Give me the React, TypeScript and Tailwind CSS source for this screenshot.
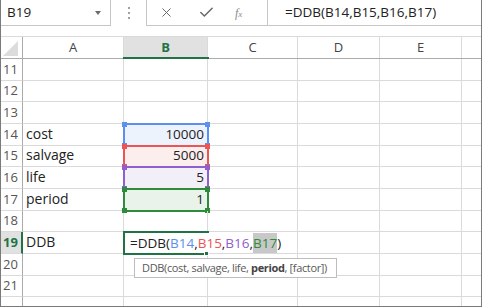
import { X, Check } from "lucide-react";

type RowSpec = { n: number; h: string; box: string; a?: string; b?: string; range?: Range };
type Range = { line: string; fill: string; sq: string };

const BLUE: Range = { line: "border-[#5b8ff0]", fill: "bg-[#edf3fd]", sq: "bg-[#5b8ff0]" };
const RED: Range = { line: "border-[#eb5555]", fill: "bg-[#fdeeee]", sq: "bg-[#eb5555]" };
const PURPLE: Range = { line: "border-[#8d5fcf]", fill: "bg-[#f3eff9]", sq: "bg-[#8d5fcf]" };
const GREEN: Range = { line: "border-[#2e8b3a]", fill: "bg-[#e9f3e9]", sq: "bg-[#2e8b3a]" };

const ROWS: RowSpec[] = [
  { n: 11, h: "h-[22px]", box: "h-[24px]" },
  { n: 12, h: "h-[21px]", box: "h-[23px]" },
  { n: 13, h: "h-[22px]", box: "h-[24px]" },
  { n: 14, h: "h-[22px]", box: "h-[24px]", a: "cost", b: "10000", range: BLUE },
  { n: 15, h: "h-[21px]", box: "h-[23px]", a: "salvage", b: "5000", range: RED },
  { n: 16, h: "h-[22px]", box: "h-[24px]", a: "life", b: "5", range: PURPLE },
  { n: 17, h: "h-[22px]", box: "h-[24px]", a: "period", b: "1", range: GREEN },
  { n: 18, h: "h-[21px]", box: "h-[23px]" },
  { n: 19, h: "h-[22px]", box: "h-[24px]", a: "DDB" },
  { n: 20, h: "h-[22px]", box: "h-[24px]" },
  { n: 21, h: "h-[21px]", box: "h-[23px]" },
];

const grid = "border-r border-b border-[#dadada]";

export default function App() {
  return (
    <div className="flex h-[307px] w-[482px] flex-col overflow-hidden border-x border-b border-[#7a7a7a] bg-white font-['Open_Sans',sans-serif] text-[#222]">
      <FormulaBar />
      <div className="h-[10px] shrink-0" />
      <HeaderRow />
      {ROWS.map((r) => (
        <Row key={r.n} row={r} />
      ))}
      <div className="flex min-h-0 flex-1">
        <div className="w-[22px] shrink-0 border-r border-[#ababab]" />
        <div className="w-[101px] shrink-0 border-r border-[#dadada]" />
        <div className="w-[84px] shrink-0 border-r border-[#dadada]" />
        <div className="w-[90px] shrink-0 border-r border-[#dadada]" />
        <div className="w-[82px] shrink-0 border-r border-[#dadada]" />
        <div className="w-[82px] shrink-0 border-r border-[#dadada]" />
        <div className="flex-1" />
      </div>
    </div>
  );
}

function FormulaBar() {
  return (
    <div className="flex h-[26px] shrink-0 text-[13.5px]">
      <div className="relative flex w-[110px] shrink-0 items-center border-r border-b border-[#c6c6c6] pl-[6px]">
        B19
        <span className="absolute right-[9px] top-[11px] h-0 w-0 border-x-[3.5px] border-t-[4px] border-x-transparent border-t-[#6b6b6b]" />
      </div>
      <div className="flex w-[35px] shrink-0 flex-col items-center justify-center gap-[3px] pl-[1px]">
        <span className="h-[2px] w-[2px] bg-[#a0a0a0]" />
        <span className="h-[2px] w-[2px] bg-[#a0a0a0]" />
        <span className="h-[2px] w-[2px] bg-[#a0a0a0]" />
      </div>
      <div className="flex w-[121px] shrink-0 items-center border-l border-b border-[#c6c6c6] text-[#6b6b6b]">
        <X className="ml-[12px]" size={15} strokeWidth={1.6} />
        <Check className="ml-[24px]" size={17} strokeWidth={2.2} />
        <span className="ml-[20px] font-['Liberation_Serif',serif] text-[12px] italic text-[#8a8a8a]">
          f<span className="text-[9px]">x</span>
        </span>
      </div>
      <div className="flex flex-1 items-center border-l border-b border-[#c6c6c6] pl-[17px]">
        =DDB(B14,B15,B16,B17)
      </div>
    </div>
  );
}

function HeaderRow() {
  const col = "flex shrink-0 items-center justify-center border-r border-[#dadada] text-[13px] text-[#444]";
  return (
    <div className="flex h-[23px] shrink-0 border-y border-t-[#dadada] border-b-[#ababab]">
      <div className="flex w-[22px] shrink-0 items-end justify-end border-r border-[#ababab] pb-[2px] pr-[4px]">
        <svg width="15" height="15" viewBox="0 0 15 15">
          <polygon points="15,0 15,15 0,15" fill="#dcdcdc" />
        </svg>
      </div>
      <div className={col + " w-[101px]"}>A</div>
      <div className="relative flex w-[84px] shrink-0 items-center justify-center border-r border-[#dadada] bg-[#e1e1e1] text-[13px] font-bold text-[#217346]">
        B
        <span className="absolute -bottom-[1px] -left-[1px] h-[2px] w-[86px] bg-[#217346]" />
      </div>
      <div className={col + " w-[90px]"}>C</div>
      <div className={col + " w-[82px]"}>D</div>
      <div className={col + " w-[82px]"}>E</div>
      <div className="flex-1" />
    </div>
  );
}

function Row({ row }: { row: RowSpec }) {
  const active = row.n === 19;
  return (
    <div className={"flex shrink-0 text-[13.5px] " + row.h}>
      <div
        className={
          "flex w-[22px] shrink-0 items-center border-b border-[#dadada] pl-[2px] text-[13px] " +
          (active
            ? "border-r-2 border-r-[#217346] bg-[#e1e1e1] font-bold text-[#217346]"
            : "border-r border-r-[#ababab] text-[#555]")
        }
      >
        {row.n}
      </div>
      <div className={"flex w-[101px] shrink-0 items-end pb-[1px] pl-[3px] text-[14px] " + grid}>{row.a}</div>
      <div
        className={
          "relative flex w-[84px] shrink-0 items-end justify-end pb-[1px] pr-[3px] " +
          grid +
          (row.range ? " " + row.range.fill : "")
        }
      >
        {row.b}
        {row.range && <RangeBox range={row.range} box={row.box} />}
        {active && <ActiveCell />}
      </div>
      <div className={"w-[90px] shrink-0 " + grid} />
      <div className={"w-[82px] shrink-0 " + grid} />
      <div className={"w-[82px] shrink-0 " + grid} />
      <div className="flex-1 border-b border-[#dadada]" />
    </div>
  );
}

function RangeBox({ range, box }: { range: Range; box: string }) {
  const sq = "absolute h-[5px] w-[5px] " + range.sq;
  return (
    <div className={"absolute -left-[1px] -top-[1px] w-[86px] " + box}>
      <div className={"absolute inset-0 border-2 " + range.line} />
      <span className={sq + " -left-[1px] -top-[1px]"} />
      <span className={sq + " -right-[1px] -top-[1px]"} />
      <span className={sq + " -bottom-[1px] -left-[1px]"} />
      <span className={sq + " -bottom-[1px] -right-[1px]"} />
    </div>
  );
}

function ActiveCell() {
  return (
    <>
      <div className="absolute -left-[1px] -top-[1px] h-[24px] w-[86px] border-2 border-[#217346]" />
      <div className="absolute left-[1px] top-[1px] z-10 flex h-[20px] w-[160px] items-center whitespace-nowrap bg-white pl-[5px]">
        =DDB(
        <span className="text-[#5b8ff0]">B14</span>,
        <span className="text-[#eb5555]">B15</span>,
        <span className="text-[#8d5fcf]">B16</span>,
        <span className="bg-[#c8c8c8] text-[#2e8b3a]">B17</span>)
      </div>
      <span className="absolute -bottom-[3px] -right-[2px] z-10 h-[5px] w-[5px] border border-white bg-[#217346]" />
      <div className="absolute left-[10px] top-[26px] z-20 flex h-[20px] w-[203px] items-center whitespace-nowrap border border-[#bdbdbd] bg-white pl-[7px] text-[11px] tracking-[-0.35px] text-[#595959]">
        DDB(cost, salvage, life,&nbsp;<b className="font-bold text-[#444]">period</b>, [factor])
      </div>
    </>
  );
}
